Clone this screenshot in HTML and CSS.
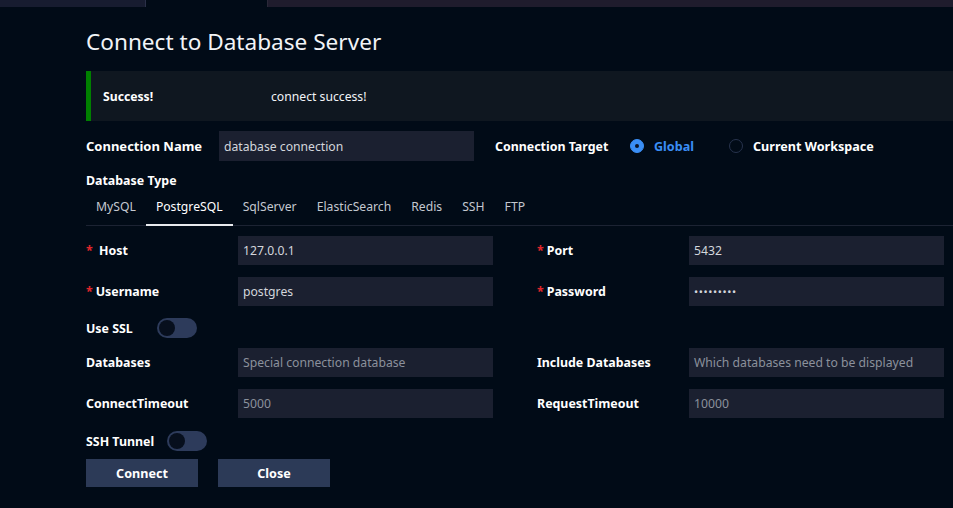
FILE: index.html
```html
<!DOCTYPE html>
<html>
<head>
<meta charset="utf-8">
<link rel="stylesheet" href="styles.css">
</head>
<body>
<div class="topbar">
  <div class="tab tab-left"></div>
  <div class="tab tab-active"></div>
  <div class="tab tab-right"></div>
</div>
<main class="page">
  <h1 class="title">Connect to Database Server</h1>
  <div class="alert">
    <span class="alert-title">Success!</span>
    <span class="alert-msg">connect success!</span>
  </div>

  <div class="name-row">
    <label class="lbl lbl-name">Connection Name</label>
    <div class="input input-name">database connection</div>
    <label class="lbl lbl-target">Connection Target</label>
    <div class="radio checked"><span class="dot"></span><span class="radio-text">Global</span></div>
    <div class="radio"><span class="dot"></span><span class="radio-text">Current Workspace</span></div>
  </div>

  <div class="lbl type-lbl">Database Type</div>
  <nav class="tabs">
    <span class="dbtab">MySQL</span>
    <span class="dbtab active">PostgreSQL</span>
    <span class="dbtab">SqlServer</span>
    <span class="dbtab">ElasticSearch</span>
    <span class="dbtab">Redis</span>
    <span class="dbtab">SSH</span>
    <span class="dbtab">FTP</span>
  </nav>

  <div class="form">
    <div class="field"><label class="lbl"><span class="req">*</span> Host</label><div class="input">127.0.0.1</div></div>
    <div class="field"><label class="lbl"><span class="req">*</span>Port</label><div class="input">5432</div></div>
    <div class="field"><label class="lbl"><span class="req">*</span>Username</label><div class="input">postgres</div></div>
    <div class="field"><label class="lbl"><span class="req">*</span>Password</label><div class="input pw">•••••••••</div></div>
    <div class="field switch-field"><label class="lbl lbl-ssl">Use SSL</label><span class="switch"><span class="knob"></span></span></div>
    <div class="field switch-field"></div>
    <div class="field"><label class="lbl">Databases</label><div class="input ph">Special connection database</div></div>
    <div class="field"><label class="lbl">Include Databases</label><div class="input ph">Which databases need to be displayed</div></div>
    <div class="field"><label class="lbl">ConnectTimeout</label><div class="input ph">5000</div></div>
    <div class="field"><label class="lbl">RequestTimeout</label><div class="input ph">10000</div></div>
  </div>

  <div class="ssh-row"><label class="lbl">SSH Tunnel</label><span class="switch"><span class="knob"></span></span></div>
  <div class="buttons">
    <button class="btn">Connect</button>
    <button class="btn">Close</button>
  </div>
</main>
</body>
</html>
```
FILE: styles.css
```css
* { box-sizing: border-box; }
html, body { margin: 0; padding: 0; }
body {
  background: #010b17;
  color: #ffffff;
  font-family: "Noto Sans", "Open Sans", sans-serif;
  font-size: 12.2px;
  width: 953px;
  height: 508px;
  overflow: hidden;
}
.topbar { display: flex; height: 7px; }
.tab-left { width: 146px; background: #171c30; border-right: 1px solid #2a3048; }
.tab-active { width: 121px; background: #010b17; }
.tab-right { flex: 1; background: #1f1c2d; border-left: 1px solid #2a2838; }

.page { padding-left: 86px; }
.title {
  margin: 0;
  padding-top: 20px;
  height: 64px;
  font-size: 22.6px;
  font-weight: 400;
  line-height: 30px;
  color: #f2f4f7;
}
.alert {
  display: flex;
  align-items: center;
  height: 50px;
  background: #0f1720;
  border-left: 5px solid #008000;
  padding-left: 12px;
}
.alert-title { font-weight: 700; width: 168px; }
.alert-msg { color: #f2f4f7; }

.lbl { font-weight: 700; color: #ffffff; font-size: 12.4px; white-space: nowrap; }
.req { color: #e0262b; margin-right: 3px; }

.name-row {
  display: flex;
  align-items: center;
  margin-top: 10px;
  height: 30px;
}
.lbl-name { width: 133px; font-size: 13px; }
.input {
  height: 29px;
  background: #1b2030;
  color: #d3d6dc;
  padding-left: 5px;
  display: flex;
  align-items: center;
  white-space: nowrap;
  overflow: hidden;
}
.input-name { width: 255px; height: 30px; }
.lbl-target { margin-left: 21px; width: 135px; }
.radio { display: flex; align-items: center; margin-right: 35px; }
.radio .dot {
  width: 14px; height: 14px; border-radius: 50%;
  border: 1px solid #27334d;
  margin-right: 10px;
  position: relative;
}
.radio.checked .dot { background: #3a8ef5; border-color: #3a8ef5; }
.radio.checked .dot::after {
  content: ""; position: absolute; left: 4px; top: 4px;
  width: 4px; height: 4px; border-radius: 50%; background: #0a1426;
}
.radio-text { font-weight: 700; color: #ffffff; font-size: 12.6px; }
.radio.checked .radio-text { color: #3a8ef5; }

.type-lbl { margin-top: 11px; height: 18px; line-height: 18px; }
.tabs {
  display: flex;
  height: 36px;
  border-bottom: 1px solid #1c2333;
}
.dbtab {
  position: relative;
  padding: 0 10px;
  line-height: 34px;
  color: #c4c8d0;
}
.dbtab.active { color: #ffffff; }
.dbtab.active::after {
  content: ""; position: absolute; left: 0; right: 0; bottom: -1px;
  height: 2px; background: #e8eaee;
}

.form {
  display: grid;
  grid-template-columns: 407px 407px;
  column-gap: 44px;
  row-gap: 12px;
  margin-top: 10px;
}
.field { display: flex; align-items: center; height: 29px; }
.field .lbl { width: 152px; }
.field .input { width: 255px; }
.ph { color: #8b919c; }
.pw { font-size: 11px; letter-spacing: 0.6px; color: #d3d6dc; }
.switch-field { height: 20px; margin-bottom: -2px; }
.field .lbl-ssl { width: 71px; }

.switch {
  display: inline-block;
  width: 40px; height: 20px; border-radius: 10px;
  background: #2d3b5b;
  position: relative;
}
.knob {
  position: absolute; left: 2px; top: 2px;
  width: 16px; height: 16px; border-radius: 50%;
  background: #070f1d;
}
.ssh-row { display: flex; align-items: center; margin-top: 13px; height: 20px; }
.ssh-row .lbl { width: 81px; }

.buttons { display: flex; gap: 20px; margin-top: 8px; }
.btn {
  width: 112px; height: 28px;
  background: #2c3a57;
  border: none;
  color: #ffffff;
  font-family: inherit;
  font-size: 12.6px;
  font-weight: 700;
  padding: 0;
}
```
